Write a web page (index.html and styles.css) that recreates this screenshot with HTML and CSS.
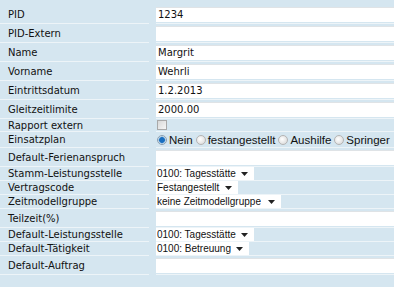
FILE: index.html
```html
<!DOCTYPE html>
<html lang="de">
<head>
<meta charset="utf-8">
<title>Person</title>
<link rel="stylesheet" href="styles.css">
</head>
<body>
<form class="form">
  <div class="row row-input"><div class="label">PID</div><div class="value"><input class="text" type="text" value="1234"></div></div>
  <div class="row row-input"><div class="label">PID-Extern</div><div class="value"><input class="text" type="text" value=""></div></div>
  <div class="row row-input"><div class="label">Name</div><div class="value"><input class="text" type="text" value="Margrit"></div></div>
  <div class="row row-input"><div class="label">Vorname</div><div class="value"><input class="text" type="text" value="Wehrli"></div></div>
  <div class="row row-input"><div class="label">Eintrittsdatum</div><div class="value"><input class="text" type="text" value="1.2.2013"></div></div>
  <div class="row row-input"><div class="label">Gleitzeitlimite</div><div class="value"><input class="text" type="text" value="2000.00"></div></div>
  <div class="row row-check"><div class="label">Rapport extern</div><div class="value"><input class="check" type="checkbox"></div></div>
  <div class="row row-radio"><div class="label">Einsatzplan</div><div class="value radios">
    <label class="opt"><input class="radio" type="radio" name="ep" checked><span>Nein</span></label>
    <label class="opt"><input class="radio" type="radio" name="ep"><span>festangestellt</span></label>
    <label class="opt"><input class="radio" type="radio" name="ep"><span>Aushilfe</span></label>
    <label class="opt"><input class="radio" type="radio" name="ep"><span>Springer</span></label>
  </div></div>
  <div class="row row-input"><div class="label">Default-Ferienanspruch</div><div class="value"><input class="text" type="text" value=""></div></div>
  <div class="row row-select"><div class="label">Stamm-Leistungsstelle</div><div class="value"><span class="sel"><select><option>0100: Tagesstätte</option></select><svg class="arrow" width="7" height="4" viewBox="0 0 7 4"><path d="M0 0H7L3.5 4Z" fill="#222"/></svg></span></div></div>
  <div class="row row-select"><div class="label">Vertragscode</div><div class="value"><span class="sel"><select><option>Festangestellt</option></select><svg class="arrow" width="7" height="4" viewBox="0 0 7 4"><path d="M0 0H7L3.5 4Z" fill="#222"/></svg></span></div></div>
  <div class="row row-select"><div class="label">Zeitmodellgruppe</div><div class="value"><span class="sel"><select class="wide"><option>keine Zeitmodellgruppe</option></select><svg class="arrow" width="7" height="4" viewBox="0 0 7 4"><path d="M0 0H7L3.5 4Z" fill="#222"/></svg></span></div></div>
  <div class="row row-input"><div class="label">Teilzeit(%)</div><div class="value"><input class="text" type="text" value=""></div></div>
  <div class="row row-select"><div class="label">Default-Leistungsstelle</div><div class="value"><span class="sel"><select><option>0100: Tagesstätte</option></select><svg class="arrow" width="7" height="4" viewBox="0 0 7 4"><path d="M0 0H7L3.5 4Z" fill="#222"/></svg></span></div></div>
  <div class="row row-select"><div class="label">Default-Tätigkeit</div><div class="value"><span class="sel"><select><option>0100: Betreuung</option></select><svg class="arrow" width="7" height="4" viewBox="0 0 7 4"><path d="M0 0H7L3.5 4Z" fill="#222"/></svg></span></div></div>
  <div class="row row-input"><div class="label">Default-Auftrag</div><div class="value"><input class="text" type="text" value=""></div></div>
</form>
</body>
</html>
```

FILE: styles.css
```css
html, body {
  margin: 0;
  padding: 0;
  overflow: hidden;
  background: #d5e6f0;
}
body {
  font-family: "DejaVu Sans", Verdana, sans-serif;
  font-size: 10px;
  color: #111;
  height: 287px;
}
.form {
  padding-top: 5px;
  display: flex;
  flex-direction: column;
}
.row {
  display: grid;
  grid-template-columns: 149px 1fr;
  column-gap: 7px;
}
.label, .value {
  border-bottom: 1px solid #edf4f8;
  display: flex;
  align-items: center;
  min-width: 0;
}
.label {
  padding-left: 8px;
  white-space: nowrap;
}
.row-input .label, .row-input .value { height: 18px; }
.row-check .label, .row-check .value { height: 12px; }
.row-radio .label, .row-radio .value { height: 15px; }
.row-select .label, .row-select .value { height: 13px; }
.text {
  box-sizing: border-box;
  width: 260px;
  flex: none;
  height: 15px;
  margin: 0;
  padding: 0 2px;
  border: none;
  border-top: 1px solid #dfe3e6;
  background: #fff;
  font-family: "DejaVu Sans", Verdana, sans-serif;
  font-size: 10px;
  color: #111;
  outline: none;
}
.check {
  appearance: none;
  -webkit-appearance: none;
  box-sizing: border-box;
  width: 10px;
  height: 10px;
  margin: 0 0 0 1px;
  border: 1px solid #a9a9a9;
  background: linear-gradient(135deg, #d8d8d8, #f6f6f6);
}
.radios {
  gap: 3px;
  font-family: "Liberation Sans", Arial, sans-serif;
  font-size: 11.5px;
  white-space: nowrap;
}
.opt {
  display: flex;
  align-items: center;
  gap: 2px;
}
.radio {
  appearance: none;
  -webkit-appearance: none;
  box-sizing: border-box;
  width: 10px;
  height: 10px;
  margin: 0 0 0 1px;
  border-radius: 50%;
  border: 1px solid #b4b4b4;
  background: radial-gradient(circle at 40% 40%, #ffffff, #d4d4d4);
}
.radio:checked {
  border-color: #8a9fb0;
  background: radial-gradient(circle, #1a6fc0 0 2.5px, #6fa8d8 3px, #e8eef3 4px);
}
.opt + .opt .radio { margin-left: 0; }
.sel {
  position: relative;
  display: inline-flex;
}
.sel select {
  appearance: none;
  -webkit-appearance: none;
  height: 13px;
  margin: 0;
  padding: 0 18px 0 1px;
  border: none;
  background: #fff;
  font-family: "Liberation Sans", Arial, sans-serif;
  font-size: 10px;
  line-height: 13px;
  color: #111;
  outline: none;
}
.sel select.wide { padding-right: 20px; }
.arrow {
  position: absolute;
  right: 6px;
  top: 5px;
  pointer-events: none;
}
```
